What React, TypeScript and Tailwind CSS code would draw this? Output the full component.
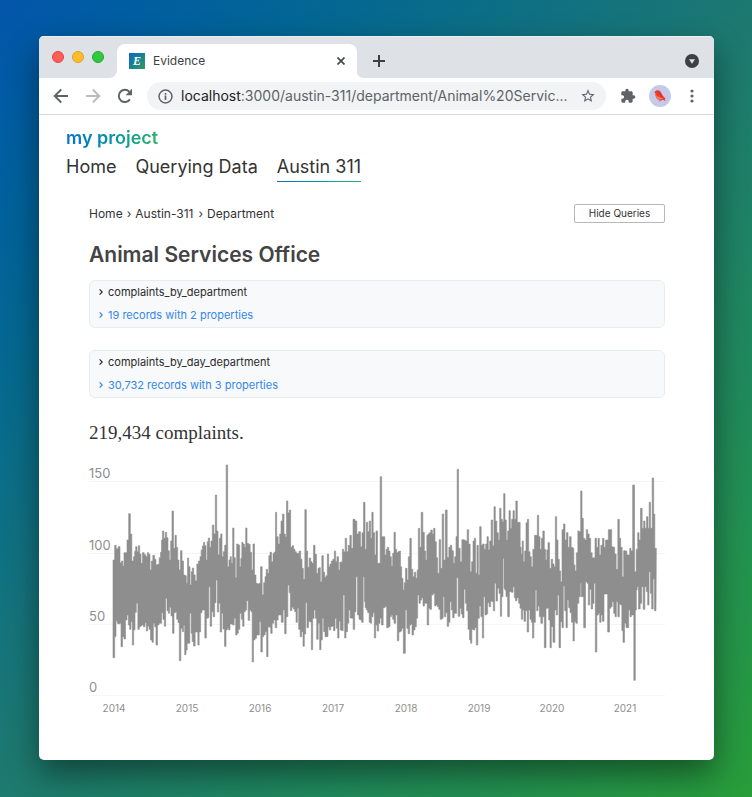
import React from "react";

type Segment = { origin: number; tops: string; bottoms: string };

const segments: Segment[] = [
  {
    origin: 80,
    tops: "102,300 106,256 111,266 118,260 122,308 127,303 130,318 134,278 139,278 143,240 149,161 153,222 158,303 163,290 165,274 169,260 173,275 177,257 181,282 185,310 190,278 195,284 200,290 204,278 208,283 212,330 216,303 221,286 226,298 230,315 235,313 240,293 243,277 246,240 249,213 254,235 258,217 262,233 266,272 270,300 274,243 278,153 283,265 287,226 291,262 295,300 299,330 304,272 308,303 313,345 317,347 321,370 324,294 328,320 332,375 335,335 339,324 343,345 348,362 353,312 358,303 362,290 365,270 369,258 372,247 376,257 380,300 383,245 387,234 391,262 395,243 399,195 404,222 408,105 412,213 416,285 420,235 424,222 428,290 432,275 436,256 441,15 445,320 449,300 452,290 456,310 460,204 464,293 468,353 472,252 477,255 481,320 484,295 487,247 491,252 495,262 499,204 503,250 508,253 513,277 517,330 521,252 526,345 530,370 535,372 539,370 544,320 549,404 553,368 557,350 560,328 565,340 568,287 572,277 577,305 581,280 585,276",
    bottoms: "102,593 106,530 110,482 113,490 117,492 121,490 125,560 130,530 134,537 139,480 143,465 147,495 151,508 155,485 159,555 163,510 167,457 171,430 176,508 180,500 184,497 188,495 193,500 197,488 201,513 205,498 209,508 214,540 218,547 222,490 226,500 230,555 235,495 239,490 243,490 247,458 251,478 255,499 259,415 263,452 267,460 271,442 275,468 280,520 284,458 288,456 292,478 296,488 300,602 305,505 309,515 312,495 316,584 320,570 323,550 327,550 332,460 335,520 338,545 343,558 348,516 352,516 355,555 360,516 364,458 368,450 372,450 377,534 381,475 385,473 388,380 393,499 397,455 402,470 406,428 410,360 414,456 418,430 423,516 427,460 431,507 436,559 440,510 444,505 448,510 452,492 456,492 460,495 465,475 469,525 473,520 477,508 482,460 486,478 490,499 494,455 498,450 502,422 507,481 511,450 515,455 518,606 523,540 527,535 532,525 536,525 540,485 545,576 549,530 553,525 558,515 562,590 566,500 570,502 574,520 579,490 583,480 588,503 592,480 597,465",
  },
  {
    origin: 230,
    tops: "138,157 142,230 147,252 151,222 155,183 160,162 164,222 168,230 171,123 176,158 180,150 184,262 189,257 193,268 197,275 201,280 205,280 210,273 214,298 218,325 222,358 227,149 231,273 235,322 240,294 244,305 248,310 253,256 257,283 262,340 266,325 269,323 273,365 278,287 282,337 286,352 290,347 294,282 298,320 302,312 306,303 311,298 315,273 319,305 323,290 328,330 331,307 335,306 339,268 343,275 348,235 352,275 357,256 362,226 366,265 372,178 378,183 383,222 389,215 394,260 398,218 403,127 407,268 411,187 415,215 420,183 424,235 427,157 432,218 436,285 440,213 445,310",
    bottoms: "151,465 157,487 162,450 166,521 171,470 176,375 179,398 183,452 188,442 192,447 196,455 200,487 204,445 208,508 213,530 217,515 221,559 225,522 229,428 233,503 238,484 242,486 246,569 250,475 254,450 258,475 262,538 267,490 271,569 275,540 279,475 283,515 287,530 292,530 296,500 300,510 304,500 308,498 313,512 317,475 321,505 325,534 329,484 333,510 337,512 342,405 346,534 350,515 355,490 358,450 363,474 367,475 372,508 376,455 380,350 385,465 389,478 393,480 397,487 402,350 404,425 407,443 411,450 415,458 420,487",
  },
  {
    origin: 370,
    tops: "28,310 33,50 37,230 42,230 47,285 50,268 54,262 58,273 62,290 66,318 70,280 74,217 78,268 82,278 86,275 90,273 93,320 97,355 101,390 104,368 109,325 113,360 117,290 122,235 126,328 131,350 135,337 140,355 143,330 147,205 151,262 156,157 161,217 165,273 169,300 172,226 176,222 180,218 185,210 189,222 193,205 197,245 201,293 205,340 210,239 214,325 219,162 223,300 229,150 234,292 239,262 243,256 248,272 252,310 256,290 260,230 263,28 268,265 273,305 278,239 283,240 289,243 294,209 298,252 303,335 307,305 311,243 315,235 319,340 323,256 327,345 331,200 336,256 340,252 345,268 349,252 353,230 357,270 361,243 366,180 370,257 374,140 378,183 383,218 387,240 391,145 395,178 399,185 403,101 407,180 411,240 415,213 419,152 423,205 427,178 431,152 435,178 440,123 444,187 449,187",
    bottoms: "3,490 7,470 11,458 15,534 19,495 24,513 28,490 32,475 37,495 42,443 47,440 53,503 58,500 62,470 66,465 70,478 74,490 80,465 84,542 89,516 94,513 97,505 103,580 109,450 112,505 117,521 121,495 124,492 128,525 133,510 137,500 141,475 145,405 149,430 153,420 157,413 161,438 166,430 169,430 174,495 178,445 182,448 187,405 192,400 196,438 200,435 204,440 208,448 213,478 218,475 221,410 225,470 229,458 234,499 238,487 242,425 246,450 250,473 255,460 258,460 262,353 267,469 272,445 275,462 280,473 284,388 288,430 292,452 296,508 301,540 303,550 308,508 312,510 317,503 321,555 326,475 330,438 335,470 339,534 343,410 347,465 351,462 355,428 360,440 364,423 368,425 372,452 376,370 380,423 385,385 389,400 393,469 397,410 401,295 403,385 406,390 410,410 416,470 420,395",
  },
  {
    origin: 510,
    tops: "32,262 35,283 38,243 42,305 46,273 50,188 54,178 58,275 62,290 66,320 71,268 76,226 80,226 84,166 88,230 92,268 96,235 101,213 105,268 109,300 112,270 116,248 121,325 126,298 130,312 134,320 138,170 142,240 146,298 150,333 154,365 158,209 163,192 167,240 172,218 176,262 181,230 186,262 190,265 193,315 197,333 201,278 206,213 210,215 214,93 218,175 222,235 227,240 231,209 235,222 240,235 244,278 249,293 253,293 257,235 262,262 266,235 270,285 275,256 280,235 284,262 289,240 293,240 297,209 303,209 307,260 312,262 316,282 321,328 326,178 330,235 334,262 339,350 343,272 348,273 353,285 357,285 361,265 365,273 371,75 376,335 381,268 385,218 389,240 394,145 399,205 403,183 407,205 412,170 416,205 419,127 424,205 429,54 433,162 436,265",
    bottoms: "3,395 7,397 11,380 15,413 18,422 24,413 28,430 32,445 36,478 40,450 44,484 49,452 54,516 58,450 62,478 66,487 69,534 74,487 78,390 82,452 86,438 90,470 95,490 100,470 106,563 110,445 114,445 118,480 122,563 126,500 132,547 137,450 141,465 145,405 149,563 154,485 158,503 162,378 166,452 170,503 174,420 178,443 182,458 187,487 191,543 195,485 200,490 204,430 209,410 213,370 215,410 218,410 224,503 229,365 233,370 237,435 241,388 246,447 250,430 254,370 258,576 263,465 267,460 271,487 275,465 279,484 285,402 290,402 296,516 301,445 304,440 309,425 313,460 317,470 321,425 326,470 330,432 334,435 337,512 341,547 346,490 350,503 354,503 358,450 362,470 366,465 369,465 374,661 378,450 380,390 383,380 388,447 393,430 397,380 402,448 407,380 411,395 415,435 419,335 423,400 427,447 432,357 435,452",
  },
];

function collect(side: "tops" | "bottoms"): [number, number][] {
  return segments.flatMap((s) =>
    s[side].split(" ").map((pair): [number, number] => {
      const [x, y] = pair.split(",").map(Number);
      return [s.origin - 89 + x / 3, y / 3];
    })
  );
}

// Turns the extremes into steps that change halfway between neighbours.
function steps(points: [number, number][]): [number, number][] {
  const sorted = [...points].sort((a, b) => a[0] - b[0]);
  return sorted.flatMap(([x, y], i): [number, number][] => {
    const left = i === 0 ? x - 1 : (sorted[i - 1][0] + x) / 2;
    const right = i === sorted.length - 1 ? x + 1 : (sorted[i + 1][0] + x) / 2;
    return [
      [left, y],
      [right, y],
    ];
  });
}

const outline = [...steps(collect("tops")), ...steps(collect("bottoms")).reverse()]
  .map(([x, y]) => `${x.toFixed(2)},${y.toFixed(2)}`)
  .join(" ");

const yAxis = [
  { label: "150", y: 21 },
  { label: "100", y: 93 },
  { label: "50", y: 164 },
  { label: "0", y: 235 },
];

const years = ["2014", "2015", "2016", "2017", "2018", "2019", "2020", "2021"];

function Chart() {
  return (
    <svg viewBox="0 0 576 264" className="block w-full font-['Inter',sans-serif]" role="img" aria-label="Complaints by day">
      {yAxis.map((t) => (
        <rect key={t.label} x="0" y={t.y} width="576" height="1" fill="#f5f5f5" />
      ))}
      <polygon points={outline} fill="#8e8e8e" stroke="#8e8e8e" strokeWidth="0.6" strokeLinejoin="round" />
      {yAxis.map((t) => (
        <text key={t.label} x="0" y={t.y - 3} fontSize="13" fill="#8e8e8e">
          {t.label}
        </text>
      ))}
      {years.map((year, i) => (
        <text key={year} x={25 + i * 73} y="252" fontSize="10" textAnchor="middle" fill="#8e8e8e">
          {year}
        </text>
      ))}
    </svg>
  );
}

function Favicon() {
  return (
    <span className="flex size-4 items-center justify-center bg-linear-to-br from-[#1465bd] to-[#34995a] font-['Liberation_Serif',serif] text-xs font-bold text-white italic">
      E
    </span>
  );
}

function TabBar() {
  return (
    <div className="flex h-[42px] items-end border-t border-[#eceef1] bg-[#dee1e6]">
      <div className="flex w-[78px] gap-2 self-start pt-[14px] pl-[13px]">
        <span className="size-3 rounded-full border border-[#e2463f] bg-[#ff5f57]" />
        <span className="size-3 rounded-full border border-[#e0a028] bg-[#febc2e]" />
        <span className="size-3 rounded-full border border-[#1fab2e] bg-[#32c840]" />
      </div>
      <TabCorner />
      <div className="flex h-[34px] w-60 items-center rounded-t-lg bg-white px-3 text-[#3c4043]">
        <Favicon />
        <span className="ml-2 flex-1 text-xs">Evidence</span>
        <button aria-label="Close tab" className="flex size-2 items-center justify-center">
          <svg viewBox="0 0 8 8" className="size-2" stroke="#45494d" strokeWidth="1.7">
            <path d="M.5.5l7 7M7.5.5l-7 7" />
          </svg>
        </button>
      </div>
      <TabCorner flipped />
      <button aria-label="New tab" className="mb-[11px] ml-[9px]">
        <svg viewBox="0 0 12 12" className="size-3" stroke="#3c4043" strokeWidth="2">
          <path d="M6 0v12M0 6h12" />
        </svg>
      </button>
      <button aria-label="Search tabs" className="mr-[15px] mb-[10px] ml-auto">
        <svg viewBox="0 0 14 14" className="size-[14px]">
          <circle cx="7" cy="7" r="7" fill="#3c4043" />
          <path d="M4 5.2h6L7 9.7z" fill="#dee1e6" />
        </svg>
      </button>
    </div>
  );
}

function TabCorner({ flipped = false }: { flipped?: boolean }) {
  return (
    <svg viewBox="0 0 8 8" className={flipped ? "-ml-px size-2 -scale-x-100" : "-mr-2 size-2 -translate-x-2"} aria-hidden="true">
      <path d="M8 0v8H0a8 8 0 0 0 8-8" fill="#fff" />
    </svg>
  );
}

function Toolbar() {
  return (
    <div className="flex h-[37px] items-center border-b border-[#dadce0] bg-white pr-[14px] pl-[14px]">
      <button aria-label="Back">
        <svg viewBox="0 0 16 16" className="size-4" fill="none" stroke="#5f6368" strokeWidth="1.9">
          <path d="M15 8H2M8.2 1.5L1.7 8l6.5 6.5" />
        </svg>
      </button>
      <button aria-label="Forward" className="ml-4">
        <svg viewBox="0 0 16 16" className="size-4" fill="none" stroke="#babcbe" strokeWidth="1.9">
          <path d="M1 8h13M7.8 1.5L14.3 8l-6.5 6.5" />
        </svg>
      </button>
      <button aria-label="Reload" className="ml-4">
        <svg viewBox="0 0 16 16" className="size-4">
          <path d="M12.9 11.4A6.1 6.1 0 1 1 12.4 3.8" fill="none" stroke="#5f6368" strokeWidth="1.9" />
          <path d="M15 .8v6.4H8.6z" fill="#5f6368" />
        </svg>
      </button>
      <div className="ml-[14px] flex h-7 min-w-0 flex-1 items-center rounded-full bg-[#f1f3f4] pr-[10px] pl-[11px]">
        <svg viewBox="0 0 16 16" className="size-[15px] shrink-0" aria-hidden="true">
          <circle cx="8" cy="8" r="6.9" fill="none" stroke="#5f6368" strokeWidth="1.6" />
          <path d="M7.1 7h1.8v4.7H7.1zM7.1 4.2h1.8V6H7.1z" fill="#5f6368" />
        </svg>
        <a href="#page" className="ml-2 flex-1 text-sm whitespace-nowrap text-[#5f6368]">
          <span className="text-[#202124]">localhost</span>:3000/austin-311/department/Animal%20Servic...
        </a>
        <button aria-label="Bookmark">
          <svg viewBox="0 0 24 24" className="size-4" fill="#5f6368">
            <path d="M22 9.24l-7.19-.62L12 2 9.19 8.63 2 9.24l5.46 4.73L5.82 21 12 17.27 18.18 21l-1.63-7.03L22 9.24zM12 15.4l-3.76 2.27 1-4.28-3.32-2.88 4.38-.38L12 6.1l1.71 4.04 4.38.38-3.32 2.88 1 4.28L12 15.4z" />
          </svg>
        </button>
      </div>
      <button aria-label="Extensions" className="ml-[14px]">
        <svg viewBox="0 0 24 24" className="size-4" fill="#5f6368">
          <path d="M20.5 11H19V7c0-1.1-.9-2-2-2h-4V3.5a2.5 2.5 0 0 0-5 0V5H4c-1.1 0-2 .9-2 2v3.8h1.5a2.7 2.7 0 0 1 0 5.4H2V20c0 1.1.9 2 2 2h3.8v-1.5a2.7 2.7 0 0 1 5.4 0V22H17c1.1 0 2-.9 2-2v-4h1.5a2.5 2.5 0 0 0 0-5z" />
        </svg>
      </button>
      <button aria-label="Profile" className="ml-[13px]">
        <svg viewBox="0 0 22 22" className="size-[22px]">
          <circle cx="11" cy="11" r="11" fill="#c5cae9" />
          <path d="M5.2 7.3l1.6-1.6c1.9-1 4.3-.3 5.2 1.9l2 3.4 2.6 2.7-.9.5 1 2-2.8-1.4-1.8.6C8.600 15.200 6.100 12.500 6.300 8z" fill="#ef3b2d" />
          <path d="M6.800 10c.4 2.700 2.500 4.600 5 4.500l2.200-1.500C11.400 13 9 12.300 6.800 10z" fill="#ff8466" />
          <path d="M9 7.500c1.800.5 3.200 2.500 4 4.700" stroke="#c4202c" strokeWidth=".8" fill="none" />
          <path d="M10.500 15l-.3 1.500M12 15l-.2 1.500" stroke="#a8543c" strokeWidth=".5" />
        </svg>
      </button>
      <button aria-label="Menu" className="ml-[13px]">
        <svg viewBox="0 0 16 16" className="size-4" fill="#5f6368">
          <circle cx="8" cy="3" r="1.6" />
          <circle cx="8" cy="8" r="1.6" />
          <circle cx="8" cy="13" r="1.6" />
        </svg>
      </button>
    </div>
  );
}

function Chevron() {
  return (
    <svg viewBox="0 0 4 6" className="h-[6px] w-1 shrink-0" fill="none" stroke="currentColor" strokeWidth="1.2" aria-hidden="true">
      <path d="M.6.4L3.2 3 .6 5.6" />
    </svg>
  );
}

function QueryCard({ name, summary }: { name: string; summary: string }) {
  return (
    <section className="flex h-12 flex-col rounded-md border border-[#e9ecef] bg-[#f8f9fb] pl-[9px] text-[11px] leading-4">
      <button className="flex h-[22px] items-center gap-[5px] text-left text-[#2b2b2b]">
        <Chevron />
        {name}
      </button>
      <button className="flex h-6 items-center gap-[5px] text-left text-[#3488e8]">
        <Chevron />
        {summary}
      </button>
    </section>
  );
}

export default function App() {
  return (
    <div className="min-h-screen bg-linear-135 from-[#0455ab] via-[#1d796f] to-[#289d38] px-[39px] pt-9 pb-[37px] pr-[38px] font-['Inter',sans-serif]">
      <div className="overflow-hidden rounded-[5px] bg-white pb-9 shadow-[0_14px_32px_rgba(0,0,0,0.45)]">
        <TabBar />
        <Toolbar />
        <div id="page" className="text-[#333]">
          <header className="px-[27px] pt-[11px]">
            <a href="#home" className="inline-block bg-linear-to-r from-[#1070cc] to-[#2bb068] bg-clip-text text-lg leading-6 font-semibold text-transparent">
              my project
            </a>
            <nav className="flex gap-[19px] pt-[3px] text-lg leading-7">
              <a href="#home">Home</a>
              <a href="#querying">Querying Data</a>
              <a href="#austin" className="bg-linear-to-r from-[#1070cc] to-[#2bb068] pb-px">
                <span className="block bg-white">Austin 311</span>
              </a>
            </nav>
          </header>
          <main className="pt-[22px] pr-[49px] pl-[50px]">
            <div className="flex items-center justify-between">
              <nav className="flex gap-1 text-xs">
                <a href="#home">Home</a>›<a href="#austin">Austin-311</a>
                <span className="pl-px">›</span>
                <a href="#department">Department</a>
              </nav>
              <button className="h-[19px] w-[91px] rounded-xs border border-[#b8b8b8] text-[10px]">Hide Queries</button>
            </div>
            <h1 className="pt-4 pb-[9px] text-[21px] leading-8 font-semibold text-[#444]">Animal Services Office</h1>
            <div className="flex flex-col gap-[22px]">
              <QueryCard name="complaints_by_department" summary="19 records with 2 properties" />
              <QueryCard name="complaints_by_day_department" summary="30,732 records with 3 properties" />
            </div>
            <p className="pt-[22px] pb-[14px] font-['Liberation_Serif',serif] text-[19px] leading-[26px]">219,434 complaints.</p>
            <Chart />
          </main>
        </div>
      </div>
    </div>
  );
}
